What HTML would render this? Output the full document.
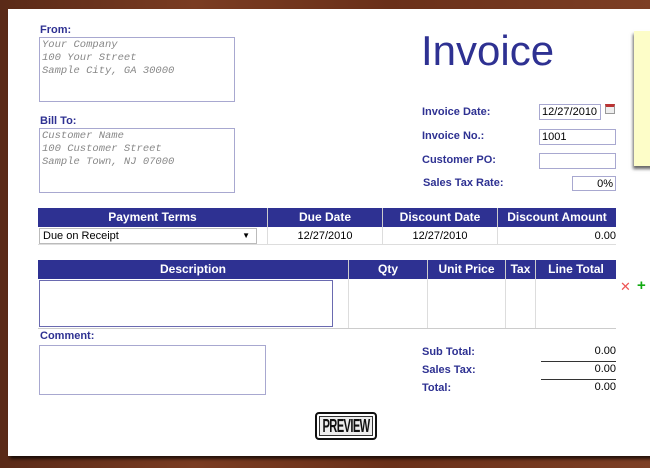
<!DOCTYPE html>
<html><head><style>
*{margin:0;padding:0;box-sizing:border-box}
body{width:650px;height:468px;position:relative;overflow:hidden;background:linear-gradient(90deg,#5a2a18,#7a3c22 30%,#6a3019 60%,#7d3f25);font-family:"Liberation Sans",sans-serif}
.a{position:absolute}
.paper{left:8px;top:9px;width:650px;height:447px;background:#fff;box-shadow:2px 3px 3px rgba(0,0,0,.7)}
.lbl{color:#2e3192;font-weight:bold;font-size:11px}
.box{border:1px solid #a8a8d0;background:#fff}
.mono{font-family:"Liberation Mono",monospace;font-style:italic;color:#888;font-size:10.5px;line-height:13px;padding:1px 2px}
.inp{border:1px solid #a8a8d0;background:#fff;font-size:11px;color:#000;padding:1px 2px;line-height:12px}
.hd{background:#2e3192;color:#fff;font-weight:bold;font-size:12px;text-align:center;line-height:19px;height:19px;border-right:1px solid #ccc}
.cell{font-size:11px;line-height:18px;height:18px;border-bottom:1px solid #ddd;border-right:1px solid #ddd}
</style></head><body>
<div class="a paper"></div>
<div class="a lbl" style="left:40px;top:24px">From:</div>
<div class="a box mono" style="left:39px;top:37px;width:196px;height:65px">Your Company<br>100 Your Street<br>Sample City, GA 30000</div>
<div class="a lbl" style="left:40px;top:115px">Bill To:</div>
<div class="a box mono" style="left:39px;top:128px;width:196px;height:65px">Customer Name<br>100 Customer Street<br>Sample Town, NJ 07000</div>
<div class="a" style="left:421px;top:27px;font-size:42px;color:#2e3192;line-height:48px">Invoice</div>
<div class="a lbl" style="left:422px;top:106px">Invoice Date:</div>
<div class="a inp" style="left:539px;top:104px;width:62px;height:16px">12/27/2010</div>
<div class="a" style="left:605px;top:104px;width:10px;height:10px;border:1px solid #999;border-top:3px solid #b33;background:#eee"></div>
<div class="a lbl" style="left:422px;top:130px">Invoice No.:</div>
<div class="a inp" style="left:539px;top:129px;width:77px;height:16px">1001</div>
<div class="a lbl" style="left:422px;top:154px">Customer PO:</div>
<div class="a inp" style="left:539px;top:153px;width:77px;height:16px"></div>
<div class="a lbl" style="left:423px;top:177px">Sales Tax Rate:</div>
<div class="a inp" style="left:572px;top:176px;width:44px;height:15px;text-align:right">0%</div>
<div class="a" style="left:634px;top:31px;width:20px;height:135px;background:#fdfdc8;box-shadow:-1px 3px 3px rgba(0,0,0,.6)"></div>

<div class="a" style="left:38px;top:208px;width:578px;display:flex">
<div class="hd" style="width:230px">Payment Terms</div><div class="hd" style="width:115px">Due Date</div><div class="hd" style="width:115px">Discount Date</div><div class="hd" style="width:118px;border:0">Discount Amount</div></div>
<div class="a" style="left:38px;top:227px;width:578px;display:flex">
<div class="cell" style="width:230px;padding:1px"><div style="border:1px solid #bbb;height:16px;width:218px;line-height:14px;padding-left:3px;position:relative">Due on Receipt<span style="position:absolute;right:6px;font-size:8px">▼</span></div></div>
<div class="cell" style="width:115px;text-align:center">12/27/2010</div><div class="cell" style="width:115px;text-align:center">12/27/2010</div><div class="cell" style="width:118px;text-align:right;border-right:0">0.00</div></div>

<div class="a" style="left:38px;top:260px;width:578px;display:flex">
<div class="hd" style="width:311px">Description</div><div class="hd" style="width:79px">Qty</div><div class="hd" style="width:78px">Unit Price</div><div class="hd" style="width:30px">Tax</div><div class="hd" style="width:80px;border:0">Line Total</div></div>
<div class="a" style="left:38px;top:279px;width:578px;height:50px;display:flex;border-bottom:1px solid #ccc">
<div style="width:311px;border-right:1px solid #ddd;padding:1px"><div style="border:1px solid #6a6ab0;height:47px;width:294px"></div></div><div style="width:79px;border-right:1px solid #ddd"></div><div style="width:78px;border-right:1px solid #ddd"></div><div style="width:30px;border-right:1px solid #ddd"></div><div style="width:80px"></div></div>
<div class="a" style="left:620px;top:279px;color:#e55;font-size:13px">✕</div>
<div class="a" style="left:637px;top:277px;color:#1a1;font-size:15px;font-weight:bold">+</div>

<div class="a lbl" style="left:40px;top:330px">Comment:</div>
<div class="a box" style="left:39px;top:345px;width:227px;height:50px"></div>
<div class="a lbl" style="left:422px;top:346px">Sub Total:</div>
<div class="a lbl" style="left:422px;top:364px">Sales Tax:</div>
<div class="a lbl" style="left:422px;top:382px">Total:</div>
<div class="a" style="left:541px;top:345px;width:75px;text-align:right;font-size:11px;border-bottom:1px solid #333;height:17px">0.00</div>
<div class="a" style="left:541px;top:363px;width:75px;text-align:right;font-size:11px;border-bottom:1px solid #333;height:17px">0.00</div>
<div class="a" style="left:541px;top:381px;width:75px;text-align:right;font-size:11px">0.00</div>
<div class="a" style="left:315px;top:412px;width:62px;height:28px;border:2px solid #111;border-radius:4px;background:#eee;box-shadow:inset 0 0 0 2px #fff,inset 0 0 0 3px #333;overflow:hidden;display:flex;align-items:center;justify-content:center"><div style="white-space:nowrap;font-weight:bold;font-size:18px;line-height:22px;letter-spacing:-1px;transform:scaleX(.62);color:#111">PREVIEW</div></div>
</body></html>
